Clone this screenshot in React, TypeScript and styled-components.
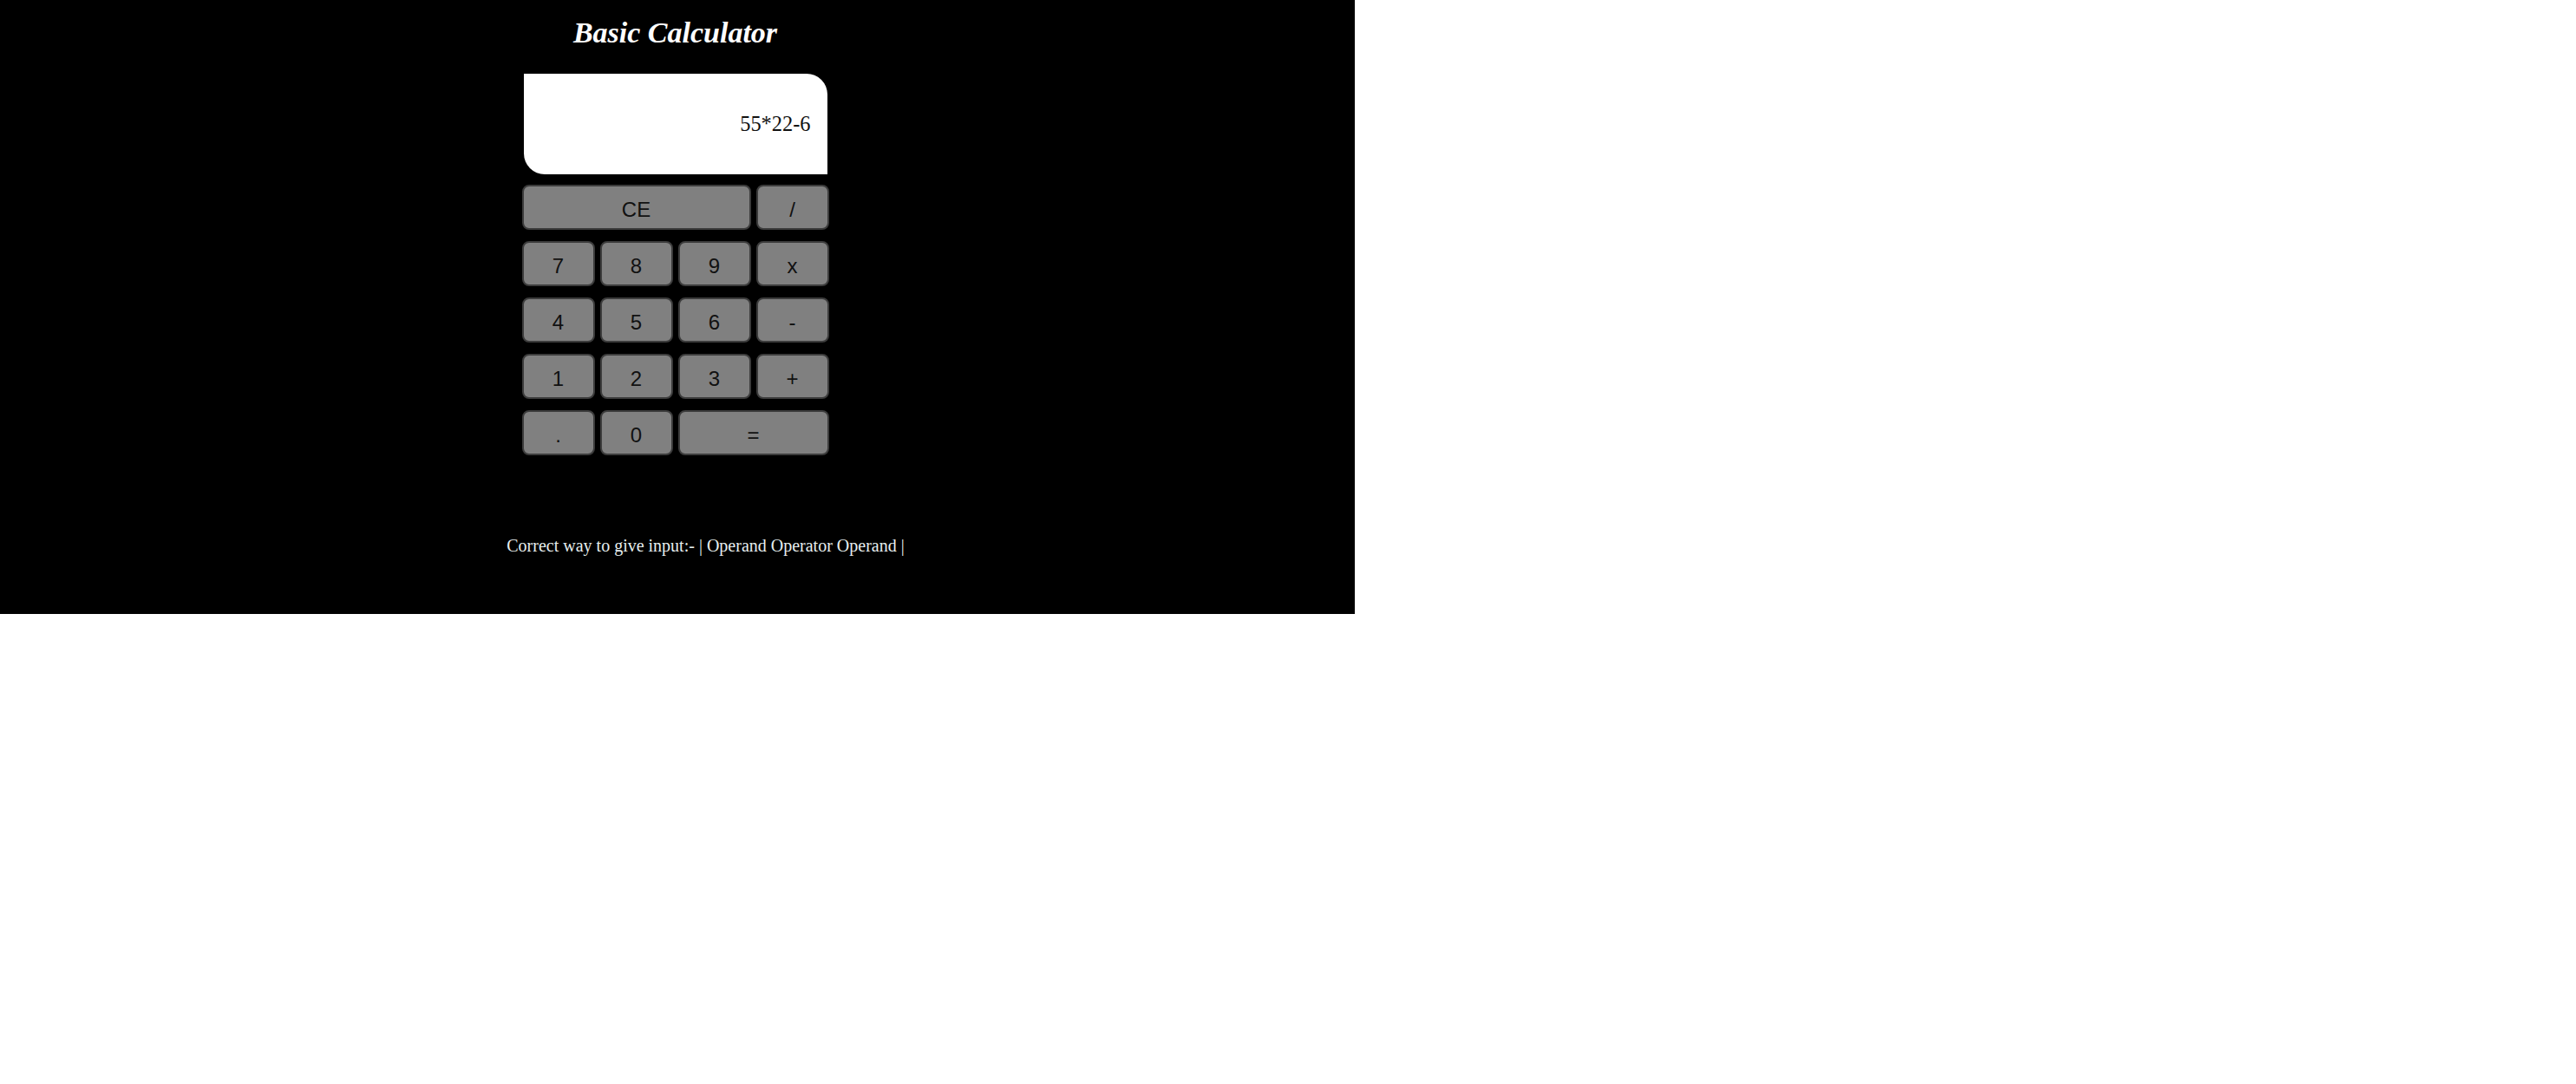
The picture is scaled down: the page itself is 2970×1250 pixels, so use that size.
import React from "react";
import styled, { createGlobalStyle } from "styled-components";

const Global = createGlobalStyle`
  html, body { margin: 0; padding: 0; background: #ffffff; }
  * { box-sizing: border-box; }
`;

const Page = styled.div`
  width: 1562px;
  height: 708px;
  background: #000000;
  display: flex;
  flex-direction: column;
  align-items: center;
  padding-top: 19px;
`;

const Column = styled.div`
  display: flex;
  flex-direction: column;
  align-items: center;
  margin-right: 5px;
`;

const Title = styled.h1`
  margin: 0 0 28px 0;
  height: 38px;
  line-height: 38px;
  font-family: "Liberation Serif", "Times New Roman", serif;
  font-size: 34px;
  font-weight: bold;
  font-style: italic;
  color: #ffffff;
`;

const Display = styled.div`
  width: 350px;
  height: 116px;
  background: #ffffff;
  border-radius: 0 24px 0 24px;
  display: flex;
  align-items: center;
  justify-content: flex-end;
  padding-right: 19px;
  font-family: "Liberation Serif", "Times New Roman", serif;
  font-size: 24.4px;
  color: #111111;
  margin-bottom: 12px;
`;

const Keys = styled.div`
  display: grid;
  grid-template-columns: repeat(4, 84px);
  grid-auto-rows: 52px;
  column-gap: 6px;
  row-gap: 13px;
`;

const Key = styled.button<{ $span?: number }>`
  grid-column: span ${(p) => p.$span ?? 1};
  background: #808080;
  border: 2px solid #3c3c3c;
  border-radius: 8px;
  font-family: "Liberation Sans", Arial, sans-serif;
  font-size: 24px;
  color: #111111;
  padding: 5px 0 0 0;
  display: flex;
  align-items: center;
  justify-content: center;
`;

const Footer = styled.p`
  margin: 93px 0 0 0;
  line-height: 23px;
  font-family: "Liberation Serif", "Times New Roman", serif;
  font-size: 20px;
  color: #e6eeee;
  padding-left: 65px;
  white-space: pre;
`;

const keys: { label: string; span?: number }[] = [
  { label: "CE", span: 3 },
  { label: "/" },
  { label: "7" },
  { label: "8" },
  { label: "9" },
  { label: "x" },
  { label: "4" },
  { label: "5" },
  { label: "6" },
  { label: "-" },
  { label: "1" },
  { label: "2" },
  { label: "3" },
  { label: "+" },
  { label: "." },
  { label: "0" },
  { label: "=", span: 2 },
];

export default function App() {
  return (
    <>
      <Global />
      <Page>
        <Column>
          <Title>Basic Calculator</Title>
          <Display>55*22-6</Display>
          <Keys>
            {keys.map((k) => (
              <Key key={k.label} $span={k.span}>
                {k.label}
              </Key>
            ))}
          </Keys>
        </Column>
        <Footer>Correct way to give input:- | Operand Operator Operand |</Footer>
      </Page>
    </>
  );
}
